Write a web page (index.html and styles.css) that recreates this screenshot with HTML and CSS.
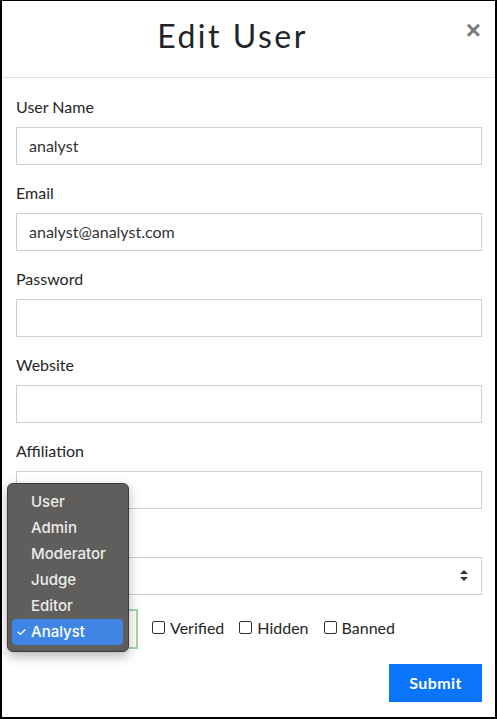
FILE: index.html
```html
<!DOCTYPE html>
<html lang="en">
<head>
<meta charset="utf-8">
<title>Edit User</title>
<link rel="stylesheet" href="styles.css">
</head>
<body>
<div class="modal">
  <div class="modal-header">
    <h5 class="modal-title">Edit User</h5>
    <button class="close" type="button">&times;</button>
  </div>
  <form class="modal-body">
    <div class="form-group">
      <label>User Name</label>
      <input class="form-control" type="text" value="analyst">
    </div>
    <div class="form-group">
      <label>Email</label>
      <input class="form-control" type="text" value="analyst@analyst.com">
    </div>
    <div class="form-group">
      <label>Password</label>
      <input class="form-control" type="password" value="">
    </div>
    <div class="form-group">
      <label>Website</label>
      <input class="form-control" type="text" value="">
    </div>
    <div class="form-group">
      <label>Affiliation</label>
      <input class="form-control" type="text" value="">
    </div>
    <div class="form-group">
      <label class="covered-label"></label>
      <div class="select-wrap">
        <div class="form-control select"></div>
        <svg class="select-arrows" width="8" height="11" viewBox="0 0 8 11"><path d="M4 0 L8 4 L0 4 Z M4 11 L8 7 L0 7 Z" fill="#333"/></svg>
      </div>
    </div>
    <div class="type-row">
      <div class="form-control type-select"></div>
      <label class="check"><span class="box"></span>Verified</label>
      <label class="check"><span class="box"></span>Hidden</label>
      <label class="check"><span class="box"></span>Banned</label>
    </div>
    <div class="actions">
      <button class="btn-submit" type="button">Submit</button>
    </div>
  </form>
  <ul class="menu">
    <li class="menu-item">User</li>
    <li class="menu-item">Admin</li>
    <li class="menu-item">Moderator</li>
    <li class="menu-item">Judge</li>
    <li class="menu-item">Editor</li>
    <li class="menu-item selected"><span class="tick">&#10003;</span>Analyst</li>
  </ul>
</div>
</body>
</html>
```

FILE: styles.css
```css
html, body {
  margin: 0;
  padding: 0;
  background: #fff;
  overflow: hidden;
}

.modal {
  position: relative;
  box-sizing: border-box;
  width: 497px;
  height: 719px;
  border-top: 1px solid #000;
  border-left: 2px solid #000;
  border-right: 2px solid #000;
  border-bottom: 2px solid #000;
  font-family: "Lato", "Noto Sans", sans-serif;
  color: #212529;
  background: #fff;
}

.modal-header {
  display: flex;
  align-items: center;
  height: 76px;
  border-bottom: 1px solid #dee2e6;
  padding: 0 14px 0 14px;
}

.modal-title {
  flex: 1;
  margin: 0;
  text-align: center;
  font-size: 32px;
  font-weight: 400;
  letter-spacing: 2.5px;
  color: #212529;
  margin-top: -7px;
}

.close {
  width: 32px;
  height: 32px;
  border: none;
  background: none;
  padding: 0;
  font-family: "Liberation Sans", sans-serif;
  font-size: 26px;
  font-weight: 700;
  color: #7a7a7a;
  line-height: 1;
  margin-top: -19px;
  text-align: right;
}

.modal-body {
  display: flex;
  flex-direction: column;
  padding: 17px 13px 0 14px;
}

.form-group {
  display: flex;
  flex-direction: column;
  margin-bottom: 16px;
}

.form-group label {
  font-size: 16px;
  line-height: 24px;
  margin-bottom: 8px;
  color: #262626;
}

.covered-label {
  height: 24px;
}

.form-control {
  box-sizing: border-box;
  height: 38px;
  width: 100%;
  border: 1px solid #ccd0d6;
  border-radius: 0;
  padding: 0 12px 2px;
  font-family: "Lato", sans-serif;
  font-size: 16px;
  color: #333;
  background: #fff;
  outline: none;
}

.select-wrap {
  position: relative;
}

.select-arrows {
  position: absolute;
  right: 14px;
  top: 13px;
}

.type-row {
  display: flex;
  align-items: center;
  height: 38px;
  margin-top: -1px;
}

.type-select {
  width: 122px;
  flex: none;
  border: 2px solid #a5d8a5;
  height: 40px;
  margin-right: 14px;
}

.check {
  display: flex;
  align-items: center;
  font-size: 16px;
  color: #262626;
  margin-right: 15px;
  margin-top: -3px;
}

.box {
  box-sizing: border-box;
  width: 13px;
  height: 13px;
  border: 1px solid #333;
  border-radius: 2px;
  margin-right: 5px;
  background: #fff;
}

.actions {
  display: flex;
  justify-content: flex-end;
  margin-top: 16px;
}

.btn-submit {
  height: 38px;
  width: 93px;
  border: none;
  background: #0a74fa;
  color: #fff;
  font-family: "Lato", sans-serif;
  font-size: 16px;
  font-weight: 700;
  letter-spacing: 0.4px;
  padding-bottom: 2px;
}

.menu {
  position: absolute;
  left: 5px;
  top: 482px;
  width: 120px;
  margin: 0;
  padding: 5px 0 6px;
  list-style: none;
  background: #5f5e5d;
  border: 1px solid #3c3b3a;
  border-radius: 6px;
  box-shadow: 0 4px 12px rgba(0, 0, 0, 0.3);
  font-family: "Inter", "Liberation Sans", sans-serif;
  font-size: 15px;
  font-weight: 500;
  color: #ececec;
}

.menu-item {
  position: relative;
  height: 26px;
  line-height: 26px;
  margin: 0 5px 0 4px;
  padding-left: 19px;
  border-radius: 4px;
}

.menu-item.selected {
  background: #3f85e3;
  color: #fff;
}

.tick {
  position: absolute;
  left: 4px;
  top: 0;
  font-size: 12px;
}
```
